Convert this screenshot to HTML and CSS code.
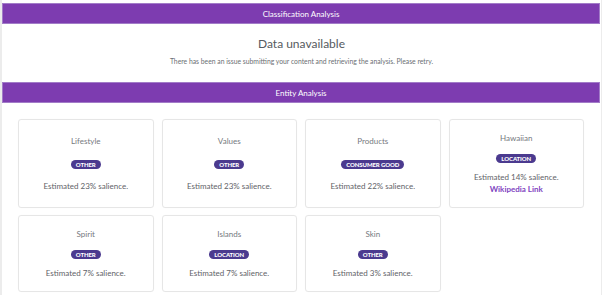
FILE: index.html
```html
<!DOCTYPE html>
<html>
<head>
<meta charset="utf-8">
<link rel="stylesheet" href="styles.css">
</head>
<body>
<div class="panel">
  <div class="bar">Classification Analysis</div>
  <div class="unavailable">
    <div class="unavailable-title">Data unavailable</div>
    <div class="unavailable-text">There has been an issue submitting your content and retrieving the analysis. Please retry.</div>
  </div>
  <div class="bar">Entity Analysis</div>
  <div class="grid">
    <div class="card"><div class="card-title">Lifestyle</div><span class="badge">OTHER</span><div class="card-text">Estimated 23% salience.</div></div>
    <div class="card"><div class="card-title">Values</div><span class="badge">OTHER</span><div class="card-text">Estimated 23% salience.</div></div>
    <div class="card"><div class="card-title">Products</div><span class="badge">CONSUMER GOOD</span><div class="card-text">Estimated 22% salience.</div></div>
    <div class="card"><div class="card-title">Hawaiian</div><span class="badge">LOCATION</span><div class="card-text">Estimated 14% salience.</div><a class="card-link" href="#">Wikipedia Link</a></div>
    <div class="card"><div class="card-title">Spirit</div><span class="badge">OTHER</span><div class="card-text">Estimated 7% salience.</div></div>
    <div class="card"><div class="card-title">Islands</div><span class="badge">LOCATION</span><div class="card-text">Estimated 7% salience.</div></div>
    <div class="card"><div class="card-title">Skin</div><span class="badge">OTHER</span><div class="card-text">Estimated 3% salience.</div></div>
  </div>
</div>
</body>
</html>
```
FILE: styles.css
```css
html, body {
  margin: 0;
  padding: 0;
}
body {
  background: #ececec;
  font-family: Lato, "Open Sans", sans-serif;
  color: #5f6368;
  height: 295px;
  overflow: hidden;
}
.panel {
  margin-left: 2px;
  width: 599px;
  height: 295px;
  background: #ffffff;
  padding-top: 3px;
  box-sizing: border-box;
}
.bar {
  width: 598px;
  height: 21px;
  box-sizing: border-box;
  background: #7d3cb0;
  border: 1px solid #a27cc8;
  color: #ffffff;
  font-size: 8px;
  display: flex;
  align-items: center;
  justify-content: center;
}
.unavailable {
  height: 58px;
  display: flex;
  flex-direction: column;
  align-items: center;
  padding-top: 12px;
  box-sizing: border-box;
}
.unavailable-title {
  font-size: 12px;
  line-height: 16px;
  color: #555a60;
}
.unavailable-text {
  font-size: 6.8px;
  line-height: 10px;
  margin-top: 4px;
  color: #6b6f74;
}
.grid {
  display: grid;
  grid-template-columns: repeat(4, 1fr);
  column-gap: 8px;
  row-gap: 7px;
  padding: 16px 16px 0 16px;
  width: 598px;
  box-sizing: border-box;
}
.card {
  border: 1px solid #e6e6e6;
  border-radius: 3px;
  box-shadow: 0 0 1px rgba(0,0,0,0.04);
  display: flex;
  flex-direction: column;
  align-items: center;
  justify-content: space-evenly;
  padding: 12px 6px;
}
.card-title {
  font-size: 8px;
  line-height: 13px;
  color: #75797e;
}
.badge {
  margin-top: 9px;
  height: 9px;
  line-height: 9px;
  padding: 0 5px;
  border-radius: 5px;
  background: #4b3a8f;
  color: #ffffff;
  font-size: 6px;
  font-weight: 900;
  letter-spacing: -0.1px;
}
.card-text {
  margin-top: 8px;
  font-size: 8px;
  line-height: 12px;
  color: #5f6368;
}
.card-link {
  font-size: 8px;
  line-height: 12px;
  color: #7f45bf;
  text-decoration: none;
  font-weight: 700;
}
```
